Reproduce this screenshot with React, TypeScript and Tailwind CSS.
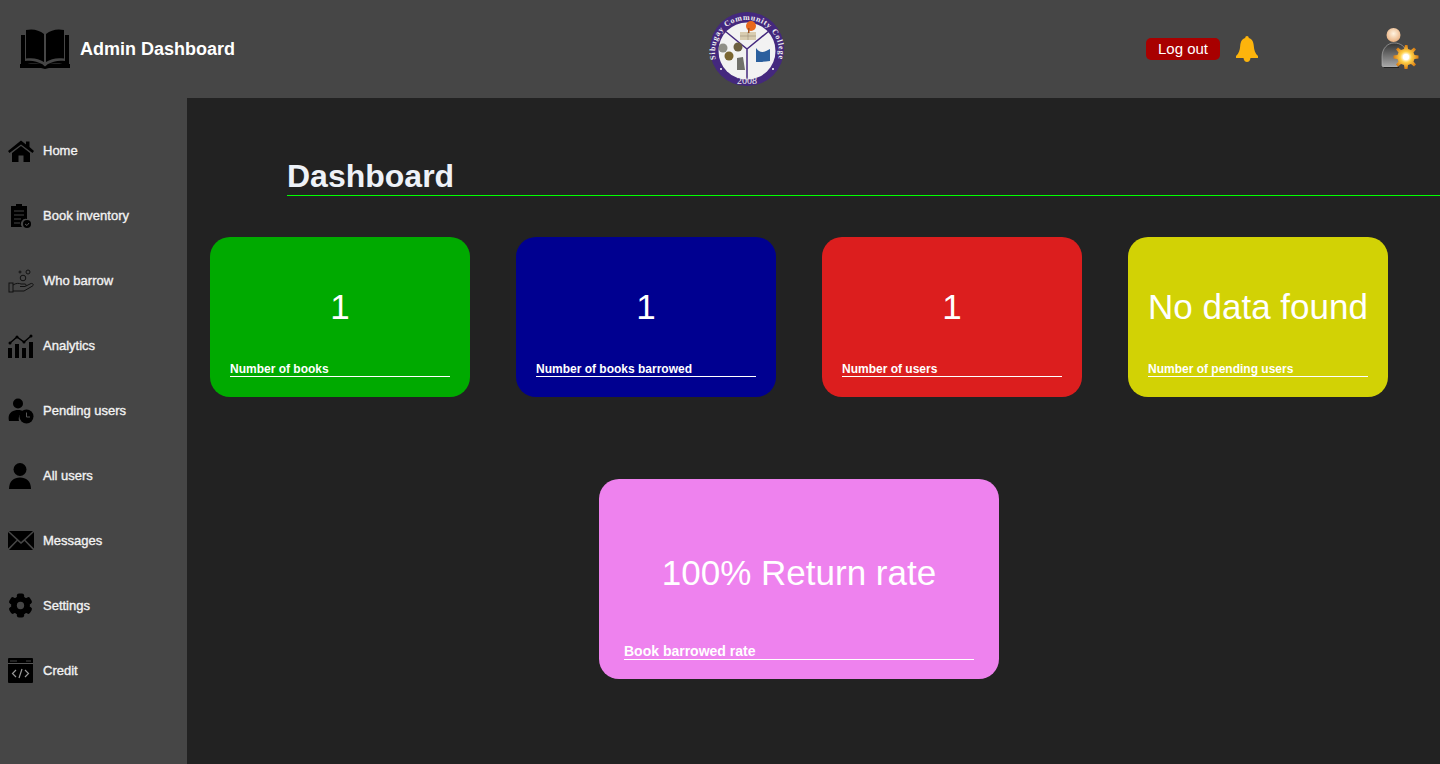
import React from "react";

const BookLogo = () => (
  <svg viewBox="0 0 52 42" className="w-[52px] h-[42px]" fill="#000">
    <path d="M2 7 H6 V33 C12 32 18 33 24 36.500 C18 35 10 35 2 37 Z M50 7 H46 V33 C40 32 34 33 28 36.500 C34 35 42 35 50 37 Z" />
    <path d="M1 36 H23 L26 38.500 L29 36 H51 V40 H30 L26 41 L22 40 H1 Z" />
    <path d="M7 2 C14 0.500 20 2 25 6 V34 C20 30.500 14 29.500 7 30.500 Z" />
    <path d="M45 2 C38 0.500 32 2 27 6 V34 C32 30.500 38 29.500 45 30.500 Z" />
  </svg>
);

const Home = () => (
  <svg viewBox="0 0 26 22" className="w-[26px] h-[22px]" fill="#000">
    <path d="M13 0.500 L18 4.500 V1.500 H21.500 V7 L26 11 L24.500 13 L13 4.500 L1.500 13 L0 11 Z" />
    <path d="M13 6 L22 13 V22 H15.500 V15.500 H10.500 V22 H4 V13 Z" />
  </svg>
);
const Clipboard = () => (
  <svg viewBox="0 0 24 26" className="w-[24px] h-[26px]">
    <path d="M3 3 H8 V1 H14 V3 H19 V16 A5 5 0 0 0 14 24 H3 Z" fill="#000" />
    <path d="M6 8 H16 M6 12 H16 M6 16 H13 M6 20 H12" stroke="#444" strokeWidth="1" />
    <circle cx="19" cy="21" r="4" fill="#000" />
    <path d="M17 21 L19 22.500 L21 20" stroke="#555" strokeWidth="1" fill="none" />
  </svg>
);
const Hand = () => (
  <svg viewBox="0 0 26 26" className="w-[26px] h-[26px]" fill="none" stroke="#111" strokeWidth="1">
    <rect x="1" y="15" width="4" height="9" />
    <path d="M5 17 C8 15 11 15 13 16 H17 C18.500 16 18.500 18.500 17 18.500 H12 M18 18 L23 15.500 C25 15 26 17 24.500 18 L16 23 H5" />
    <circle cx="15" cy="10" r="2.800" />
    <circle cx="20" cy="4" r="2" />
    <circle cx="12" cy="4" r="1" />
  </svg>
);
const Analytics = () => (
  <svg viewBox="0 0 26 24" className="w-[26px] h-[24px]" fill="#000">
    <path d="M0 14 H4 V24 H0 Z M7 10 H11 V24 H7 Z M14 14 H18 V24 H14 Z M21 8 H25 V24 H21 Z" />
    <path d="M2 9 L9 3 L16 8 L23 2" stroke="#000" strokeWidth="1.400" fill="none" />
    <circle cx="2" cy="9" r="1.500" />
    <circle cx="9" cy="3" r="1.500" />
    <circle cx="16" cy="8" r="1.500" />
    <circle cx="23" cy="2" r="1.500" />
  </svg>
);
const Pending = () => (
  <svg viewBox="0 0 26 26" className="w-[26px] h-[26px]" fill="#000">
    <circle cx="10" cy="5.500" r="5" />
    <path d="M1 23 C-1 15 5 12 10 12 C12.500 12 14.500 12.500 15.500 13.500 A8 8 0 0 0 11 23 Z" />
    <circle cx="18.500" cy="18.500" r="7" />
    <path d="M18.500 14.500 V19 H22" stroke="#555" strokeWidth="1" fill="none" />
  </svg>
);
const User = () => (
  <svg viewBox="0 0 24 26" className="w-[24px] h-[26px]" fill="#000">
    <circle cx="12" cy="6.500" r="6.500" />
    <path d="M1 26 C1 18 6 14.500 12 14.500 C18 14.500 23 18 23 26 Z" />
  </svg>
);
const Mail = () => (
  <svg viewBox="0 0 26 19" className="w-[26px] h-[19px]" fill="#000">
    <path d="M1 0 H25 L13 11 Z" />
    <path d="M0 1 L8.500 9 L0 17.500 Z M26 1 L17.500 9 L26 17.500 Z" />
    <path d="M1 19 L9.500 10 L13 13 L16.500 10 L25 19 Z" />
  </svg>
);
const Gear = () => (
  <svg viewBox="0 0 24 24" className="w-[25px] h-[25px]">
    <g fill="#000">
      <circle cx="12" cy="12" r="9" />
      <rect x="8.500" y="0.500" width="7" height="23" rx="2" />
      <rect x="8.500" y="0.500" width="7" height="23" rx="2" transform="rotate(60 12 12)" />
      <rect x="8.500" y="0.500" width="7" height="23" rx="2" transform="rotate(120 12 12)" />
    </g>
    <circle cx="12" cy="12" r="3.500" fill="#464646" />
  </svg>
);
const Code = () => (
  <svg viewBox="0 0 26 25" className="w-[26px] h-[25px]">
    <rect x="0" y="0" width="25" height="25" rx="1" fill="#000" />
    <path d="M0 5.500 H25" stroke="#555" strokeWidth="1" />
    <path d="M2 3 H9 M18 3 H23" stroke="#444" strokeWidth="1" />
    <path d="M8 12 L4.500 15.500 L8 19 M17 12 L20.500 15.500 L17 19 M14 11 L11 20" stroke="#999" strokeWidth="1.200" fill="none" />
  </svg>
);

const CollegeLogo = () => (
  <svg viewBox="0 0 74 74" className="w-[74px] h-[74px] overflow-visible">
    <defs>
      <path id="arc" d="M7 51 A32 32 0 1 1 67 51" />
    </defs>
    <circle cx="37" cy="37" r="37" fill="#44287e" />
    <circle cx="37" cy="39" r="28.500" fill="#f2f2f2" />
    <path d="M37 37 L15 19 M37 37 L59 19 M37 37 V67" stroke="#44287e" strokeWidth="1.500" />
    <path d="M30 20 H46 V28 H30 Z" fill="#d8ccb0" />
    <path d="M30 24 H46 M38 20 V28" stroke="#9a8f78" strokeWidth="0.600" />
    <circle cx="41" cy="14" r="5" fill="#e8681c" />
    <rect x="38" y="16" width="1.500" height="5" fill="#a05020" />
    <circle cx="13" cy="36" r="4.500" fill="#8f8f86" />
    <circle cx="28" cy="35" r="4.500" fill="#6b5f40" />
    <circle cx="19" cy="44" r="4.500" fill="#7a6530" />
    <path d="M27 46 L33 45 L35 58 L27 58 Z" fill="#70706a" />
    <path d="M46 36 C50 42 55 40 60 37 L60 49 C54 50 49 50 46 50 Z" fill="#2b5f9e" />
    <circle cx="11" cy="57" r="1" fill="#fff" />
    <circle cx="63" cy="57" r="1" fill="#fff" />
    <text fontSize="8" fill="#eee" fontWeight="700" letterSpacing="0.700" fontFamily="'Liberation Serif', serif">
      <textPath href="#arc" startOffset="50%" textAnchor="middle">Sibugay Community College</textPath>
    </text>
    <text x="37" y="71.500" fontSize="10" fill="#eee" textAnchor="middle" fontFamily="'Liberation Serif', serif">2008</text>
  </svg>
);

const Bell = () => (
  <svg viewBox="0 0 22 26" className="w-[22px] h-[26px]" fill="#fdb40c">
    <path d="M11 0 C12 0 12.800 .8 12.800 2 C16.500 3 17.500 6.500 17.800 10 C18.200 14 19 17.500 22 20 V22 H0 V20 C3 17.500 3.800 14 4.200 10 C4.500 6.500 5.500 3 9.200 2 C9.200 .8 10 0 11 0 Z" />
    <path d="M7.500 22 H14.500 C14 25 12.500 26 11 26 C9.500 26 8 25 7.500 22 Z" />
  </svg>
);

const AdminUser = () => (
  <svg viewBox="0 0 38 44" className="w-[38px] h-[44px]">
    <defs>
      <linearGradient id="body" x1="0" y1="0" x2="0" y2="1">
        <stop offset="0" stopColor="#333" />
        <stop offset="1" stopColor="#aaa" />
      </linearGradient>
      <radialGradient id="face" cx="0.500" cy="0.400" r="0.600">
        <stop offset="0" stopColor="#fff3e0" />
        <stop offset="1" stopColor="#e8b080" />
      </radialGradient>
      <radialGradient id="gearfill" cx="0.500" cy="0.500" r="0.500">
        <stop offset="0.200" stopColor="#fff" />
        <stop offset="0.450" stopColor="#ffd24a" />
        <stop offset="1" stopColor="#d97a10" />
      </radialGradient>
    </defs>
    <circle cx="12.500" cy="8" r="7" fill="url(#face)" />
    <path d="M3 40 C1.500 40 1 39 1 38 V30 C1 21 7 16 13 16 C20 16 24 20 25 24 L16 40 Z" fill="url(#body)" stroke="#bbb" strokeWidth="0.600" />
    <path d="M2 40 H18 V41 H3 Z" fill="#222" />
    <path
      d="M24 18 L26.500 18 L27 22 L30 23 L33 20.500 L35 22.500 L32.500 25.500 L33.500 28 L37.500 28.500 V31.500 L33.500 32 L32.500 34.500 L35 37.500 L33 39.500 L30 37 L27 38 L26.500 42 H23.500 L23 38 L20 37 L17 39.500 L15 37.500 L17.500 34.500 L16.500 32 L12.500 31.500 V28.500 L16.500 28 L17.500 25.500 L15 22.500 L17 20.500 L20 23 L23 22 Z"
      fill="url(#gearfill)"
    />
    <circle cx="25" cy="30" r="3" fill="#fff" />
  </svg>
);

const nav: [string, React.ReactNode][] = [
  ["Home", <Home />],
  ["Book inventory", <Clipboard />],
  ["Who barrow", <Hand />],
  ["Analytics", <Analytics />],
  ["Pending users", <Pending />],
  ["All users", <User />],
  ["Messages", <Mail />],
  ["Settings", <Gear />],
  ["Credit", <Code />],
];

const cards = [
  { value: "1", label: "Number of books", bg: "bg-[#00aa00]" },
  { value: "1", label: "Number of books barrowed", bg: "bg-[#000090]" },
  { value: "1", label: "Number of users", bg: "bg-[#dc1e1e]" },
  { value: "No data found", label: "Number of pending users", bg: "bg-[#d2d205]" },
];

export default function App() {
  return (
    <div className="w-[1440px] h-[764px] overflow-hidden flex flex-col bg-[#222222] text-white font-['Liberation_Sans',Arial,sans-serif]">
      <header className="h-[98px] shrink-0 bg-[#464646] flex items-center">
        <div className="w-[710px] flex items-center pl-[19px] gap-[9px]">
          <BookLogo />
          <span className="text-[18px] font-bold">Admin Dashboard</span>
        </div>
        <CollegeLogo />
        <div className="flex-1 flex items-center justify-between pl-[362px] pr-[21px]">
          <div className="flex items-center gap-[16px]">
            <button className="w-[74px] h-[22px] rounded-[5px] bg-[#a80000] text-[15px] leading-[22px] text-center">Log out</button>
            <Bell />
          </div>
          <AdminUser />
        </div>
      </header>
      <div className="flex-1 flex min-h-0">
        <aside className="w-[187px] shrink-0 bg-[#464646] pt-[20px] flex flex-col">
          {nav.map(([label, icon]) => (
            <div key={label} className="h-[65px] flex items-center shrink-0">
              <div className="w-[43px] pl-[8px] flex items-center shrink-0">{icon}</div>
              <span className="text-[13px] text-[#f2f2f2] [-webkit-text-stroke:0.35px_#f2f2f2]">{label}</span>
            </div>
          ))}
        </aside>
        <main className="flex-1 min-w-0 flex flex-col">
          <h1 className="ml-[100px] mt-[60px] h-[37px] text-[32px] leading-[37px] font-bold text-[#eef2f8]">Dashboard</h1>
          <div className="ml-[100px] h-px bg-[#00ff00]"></div>
          <div className="flex gap-[46px] pl-[23px] mt-[41px]">
            {cards.map((c) => (
              <div key={c.label} className={`w-[260px] h-[160px] rounded-[20px] px-[20px] flex flex-col ${c.bg}`}>
                <div className="h-[140px] flex-1 flex items-center justify-center pt-[15px] text-[35px] whitespace-nowrap">{c.value}</div>
                <div className="mb-[20px] text-[12px] leading-[14px] font-bold border-b border-white">{c.label}</div>
              </div>
            ))}
          </div>
          <div className="flex pl-[412px] mt-[82px]">
            <div className="w-[400px] h-[200px] rounded-[20px] px-[25px] flex flex-col bg-[#ee82ee]">
              <div className="flex-1 flex items-center justify-center pt-[25px] text-[35px]">100% Return rate</div>
              <div className="mb-[19px] text-[14px] leading-[16px] font-bold border-b border-white">Book barrowed rate</div>
            </div>
          </div>
        </main>
      </div>
    </div>
  );
}
